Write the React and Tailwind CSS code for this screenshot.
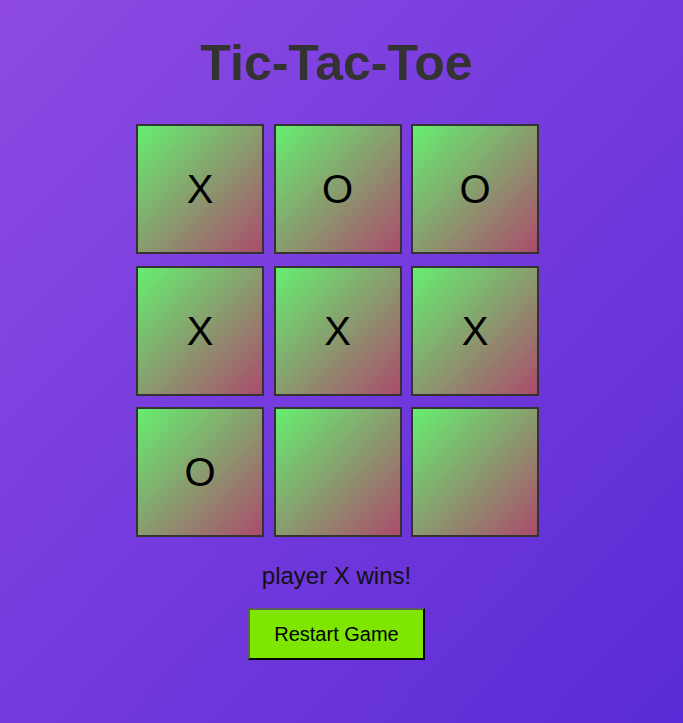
import React from "react";

const board = ["X", "O", "O", "X", "X", "X", "O", "", ""];

export default function App() {
  return (
    <div
      className="min-h-screen w-full bg-linear-to-br/srgb from-[#8e4ae3] to-[#5a2bd6] flex flex-col items-center pr-[10px] pt-[38px]"
      style={{ fontFamily: '"Liberation Sans", Arial, sans-serif' }}
    >
      <h1 className="text-[50px] leading-none font-bold text-[#333333] h-[50px]">Tic-Tac-Toe</h1>

      <div className="mt-[36px] ml-[2px] grid grid-cols-[repeat(3,128px)] gap-x-[9.5px] gap-y-[11.5px]">
        {board.map((v, i) => (
          <div
            key={i}
            className="h-[130px] border-2 border-[#333333] bg-linear-to-br/srgb from-[#66ee70] to-[#ab4c6c] flex items-center justify-center text-[40px] leading-none text-black"
          >
            {v}
          </div>
        ))}
      </div>

      <p className="mt-[27px] text-[24px] leading-none text-[#111111]">player X wins!</p>

      <button className="mt-[20px] w-[177px] h-[52px] bg-[#7ee600] text-[20px] leading-none text-black border-2 border-t-[#5e5e5e] border-l-[#5e5e5e] border-b-black border-r-black">
        Restart Game
      </button>
    </div>
  );
}
